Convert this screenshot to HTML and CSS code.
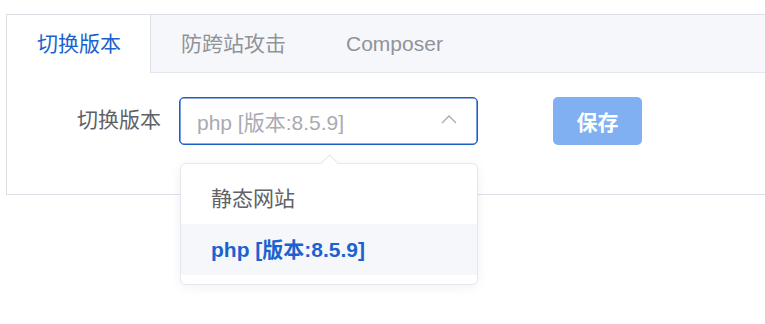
FILE: index.html
```html
<!DOCTYPE html>
<html lang="zh-CN">
<head>
<meta charset="utf-8">
<title>切换版本</title>
<link rel="stylesheet" href="styles.css">
</head>
<body>
<div class="page">
<div class="card">
  <div class="tabs-header">
    <div class="tab active">切换版本</div>
    <div class="tab">防跨站攻击</div>
    <div class="tab">Composer</div>
  </div>
  <div class="content">
    <div class="form-item">
      <label class="label">切换版本</label>
      <div class="select-wrap">
        <div class="select">
          <span class="placeholder">php [版本:8.5.9]</span>
          <svg class="chevron" width="16" height="9" viewBox="0 0 16 9"><path d="M1 8 L8 1 L15 8" fill="none" stroke="#a8abb2" stroke-width="1.3"/></svg>
        </div>
        <div class="dropdown">
          <div class="arrow"></div>
          <ul class="options">
            <li class="option">静态网站</li>
            <li class="option selected">php [版本:8.5.9]</li>
          </ul>
        </div>
      </div>
      <button class="btn">保存</button>
    </div>
  </div>
</div>
</div>
</body>
</html>
```
FILE: styles.css
```css
html, body {
  margin: 0;
  padding: 0;
  background: #fff;
}
body {
  font-family: "Liberation Sans", "Noto Sans CJK SC", sans-serif;
}
.page {
  min-height: 324px;
  padding-top: 14px;
  box-sizing: border-box;
}
.card {
  margin: 0 0 0 6px;
  border: 1px solid #dcdfe6;
  border-right: none;
  background: #fff;
}
.tabs-header {
  display: flex;
  height: 57px;
  background: #f5f7fa;
  border-bottom: 1px solid #e4e7ed;
}
.tab {
  padding: 0 30px;
  height: 57px;
  line-height: 57px;
  font-size: 21px;
  color: #909399;
}
.tab.active {
  background: #fff;
  color: #1c62cf;
  height: 58px;
  margin-bottom: -1px;
  border-right: 1px solid #dcdfe6;
  padding: 0 29px 0 30px;
}
.content {
  padding: 24px 0 22px 22px;
}
.form-item {
  display: flex;
  align-items: flex-start;
  margin-bottom: 27px;
}
.label {
  width: 150px;
  box-sizing: border-box;
  padding-right: 18px;
  text-align: right;
  font-size: 21px;
  line-height: 46px;
  color: #606266;
}
.select-wrap {
  position: relative;
  width: 299px;
}
.select {
  box-sizing: border-box;
  height: 48px;
  border: 1px solid #1a5ec8;
  box-shadow: inset 0 0 0 0.6px #1a5ec8;
  border-radius: 5px;
  display: flex;
  align-items: center;
  justify-content: space-between;
  padding: 0 20px 0 17px;
}
.placeholder {
  font-size: 21px;
  color: #a8abb2;
}
.chevron {
  display: block;
  margin-top: -3px;
}
.dropdown {
  position: absolute;
  top: 66px;
  left: 1px;
  width: 298px;
  box-sizing: border-box;
  background: #fff;
  border: 1px solid #e4e7ed;
  border-radius: 6px;
  box-shadow: 0 2px 12px rgba(0, 0, 0, 0.06);
  z-index: 10;
}
.arrow {
  position: absolute;
  top: -7px;
  left: 142px;
  width: 12px;
  height: 12px;
  background: #fff;
  border-top: 1px solid #e4e7ed;
  border-left: 1px solid #e4e7ed;
  transform: rotate(45deg);
}
.options {
  list-style: none;
  margin: 0;
  padding: 9px 0;
}
.option {
  height: 51px;
  line-height: 51px;
  padding: 0 30px;
  font-size: 21px;
  color: #606266;
}
.option.selected {
  background: #f5f7fa;
  color: #1c62cf;
  font-weight: bold;
}
.btn {
  margin-left: 75px;
  width: 89px;
  height: 48px;
  border: none;
  border-radius: 5px;
  background: #80b0f1;
  color: #fff;
  font-family: "Liberation Sans", "Noto Sans CJK SC", sans-serif;
  font-size: 21px;
  font-weight: bold;
  padding: 0;
}
```
